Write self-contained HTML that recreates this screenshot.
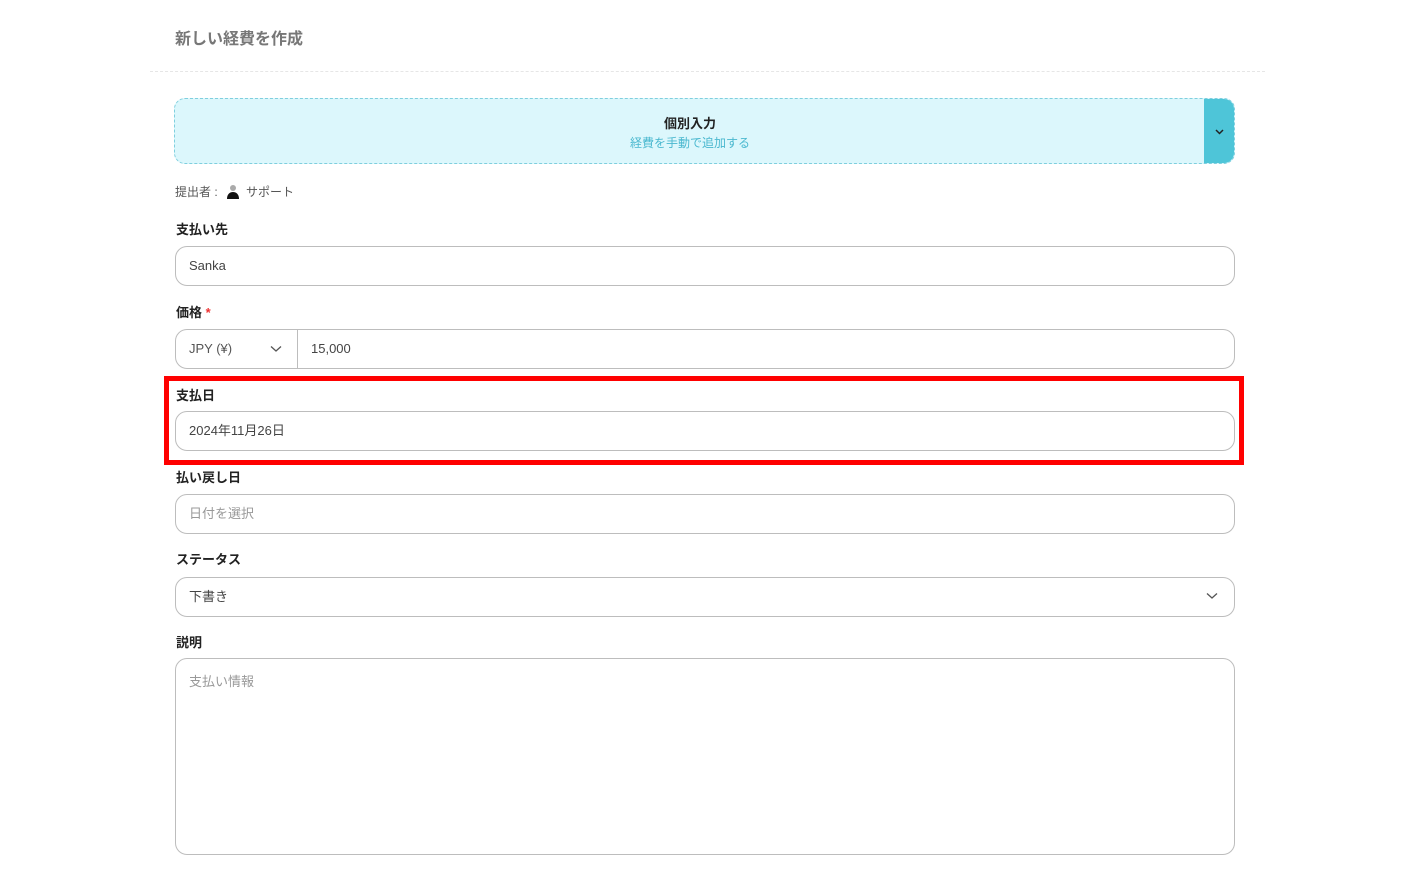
<!DOCTYPE html>
<html><head><meta charset="utf-8"><style>
*{box-sizing:border-box;margin:0;padding:0}
body{width:1415px;height:889px;background:#fff;font-family:"Liberation Sans","Noto Sans CJK JP",sans-serif;position:relative;overflow:hidden;color:#333}
.a{position:absolute}
.inp{position:absolute;left:175px;width:1060px;height:40px;border:1px solid #bdbdbd;border-radius:12px;font-size:13px;color:#444;padding-left:13px;line-height:38px;background:#fff}
.lbl{position:absolute;left:176px;font-size:13px;color:#222;font-weight:bold}
</style></head><body>
<div class="a" style="left:175px;top:25px;font-size:16px;color:#777;font-weight:bold">新しい経費を作成</div>
<div class="a" style="left:150px;top:71px;width:1115px;border-top:1px dashed #e6e6e6"></div>
<div class="a" style="left:174px;top:98px;width:1061px;height:66px;background:#dcf7fc;border:1px dashed #7fcfde;border-radius:11px;overflow:hidden">
 <div class="a" style="right:0;top:0;width:30px;height:100%;background:#4ec5d8"></div>
 <svg class="a" style="right:9px;top:29px" width="11" height="8" viewBox="0 0 11 8"><path d="M2 2l3.5 3.5L9 2" stroke="#222" stroke-width="1.5" fill="none"/></svg>
 <div class="a" style="left:0;width:1030px;top:14px;text-align:center;font-size:13px;font-weight:bold;color:#222">個別入力</div>
 <div class="a" style="left:0;width:1030px;top:35px;text-align:center;font-size:12px;color:#4ab8cf">経費を手動で追加する</div>
</div>
<div class="a" style="left:175px;top:183px;font-size:12px;color:#555">提出者 :</div>
<svg class="a" style="left:226px;top:184px" width="14" height="15" viewBox="0 0 14 15"><circle cx="7" cy="4" r="3" fill="#aaa"/><path d="M1 15c0-5 3-7 6-7s6 2 6 7z" fill="#111"/></svg>
<div class="a" style="left:246px;top:183px;font-size:12px;color:#555">サポート</div>
<div class="lbl" style="top:219px">支払い先</div>
<div class="inp" style="top:246px">Sanka</div>
<div class="lbl" style="top:302px">価格 <span style="color:#e33">*</span></div>
<div class="inp" style="top:329px;color:#555">JPY (¥)</div>
<div class="a" style="left:297px;top:330px;border-left:1px solid #bdbdbd;height:38px;width:937px;font-size:13px;color:#444;padding-left:13px;line-height:38px">15,000</div>
<svg class="a" style="left:270px;top:345px" width="12" height="8" viewBox="0 0 12 8"><path d="M1 1.5l5 4.5 5-4.5" stroke="#555" stroke-width="1.3" fill="none"/></svg>
<div class="a" style="left:164px;top:376px;width:1080px;height:89px;border:5px solid #f00"></div>
<div class="lbl" style="top:385px">支払日</div>
<div class="inp" style="top:411px">2024年11月26日</div>
<div class="lbl" style="top:467px">払い戻し日</div>
<div class="inp" style="top:494px;color:#999">日付を選択</div>
<div class="lbl" style="top:549px">ステータス</div>
<div class="inp" style="top:577px">下書き</div>
<svg class="a" style="left:1206px;top:592px" width="12" height="8" viewBox="0 0 12 8"><path d="M1 1.5l5 4.5 5-4.5" stroke="#555" stroke-width="1.3" fill="none"/></svg>
<div class="lbl" style="top:632px">説明</div>
<div class="inp" style="top:658px;height:197px;line-height:normal;padding-top:12px;color:#999">支払い情報</div>
</body></html>
